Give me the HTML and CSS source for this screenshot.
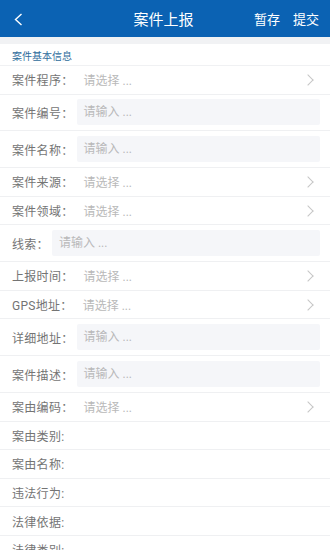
FILE: index.html
```html
<!DOCTYPE html>
<html lang="zh-CN">
<head>
  <meta charset="UTF-8">
  <meta name="viewport" content="width=device-width, initial-scale=1.0">
  <title>案件上报</title>
  <link rel="stylesheet" href="styles.css">
</head>
<body>
<!-- Top bar -->
<div class="topbar">
  <span class="back">
    <svg width="9" height="13" viewBox="0 0 9 13"><polyline points="7.5,1 1.5,6.5 7.5,12" fill="none" stroke="#fff" stroke-width="1.4"/></svg>
  </span>
  <span class="title">案件上报</span>
  <span class="actions"><span>暂存</span><span>提交</span></span>
</div>
<div class="strip"></div>

<div class="form">
  <div class="section-title">案件基本信息</div>

  <div class="row select"><span class="label">案件程序：</span><span class="value">请选择 ...</span><i class="arrow"></i></div>
  <div class="row input"><span class="label">案件编号：</span><span class="box">请输入 ...</span></div>
  <div class="row input"><span class="label">案件名称：</span><span class="box">请输入 ...</span></div>
  <div class="row select"><span class="label">案件来源：</span><span class="value">请选择 ...</span><i class="arrow"></i></div>
  <div class="row select"><span class="label">案件领域：</span><span class="value">请选择 ...</span><i class="arrow"></i></div>
  <div class="row input"><span class="label">线索：</span><span class="box">请输入 ...</span></div>
  <div class="row select"><span class="label">上报时间：</span><span class="value">请选择 ...</span><i class="arrow"></i></div>
  <div class="row select"><span class="label">GPS地址：</span><span class="value">请选择 ...</span><i class="arrow"></i></div>
  <div class="row input"><span class="label">详细地址：</span><span class="box">请输入 ...</span></div>
  <div class="row input"><span class="label">案件描述：</span><span class="box">请输入 ...</span></div>
  <div class="row select"><span class="label">案由编码：</span><span class="value">请选择 ...</span><i class="arrow"></i></div>
  <div class="row select"><span class="label">案由类别:</span></div>
  <div class="row select"><span class="label">案由名称:</span></div>
  <div class="row select"><span class="label">违法行为:</span></div>
  <div class="row select"><span class="label">法律依据:</span></div>
  <div class="row select"><span class="label">法律类别:</span></div>
</div>
</body>
</html>
```

FILE: styles.css
```css
body {
  margin: 0;
  background: #fff;
  font-family: Roboto, "Noto Sans CJK SC", sans-serif;
}

/* header */
.topbar {
  height: 37px;
  background: #0b62b3;
  color: #fff;
  display: flex;
  align-items: center;
  padding: 0 11px 0 14px;
}
.back {
  display: flex;
  align-items: center;
  margin-top: 1px;
}
.title {
  flex: 1;
  text-align: center;
  font-size: 15px;
  padding-left: 50px;
}
.actions {
  display: flex;
  gap: 13px;
  font-size: 13px;
}
.strip {
  height: 7px;
  background: #f1f2f4;
}

/* form */
.section-title {
  height: 22px;
  padding: 3px 0 0 12px;
  line-height: 20px;
  font-size: 10px;
  color: #2e6c9c;
  border-bottom: 1px solid #f0f1f3;
  box-sizing: border-box;
}
.row {
  display: flex;
  align-items: center;
  padding: 0 10px 0 12px;
  border-bottom: 1px solid #eff0f2;
  box-sizing: border-box;
  font-size: 12px;
}
.row.select {
  height: 28.6px;
}
.row.input {
  height: 36.8px;
}
.label {
  color: #747474;
  white-space: nowrap;
  letter-spacing: 0.3px;
}
.value {
  flex: 1;
  margin-left: 10px;
  color: #b9b9b9;
}
.box {
  flex: 1;
  height: 26px;
  line-height: 26px;
  margin-left: 3px;
  padding-left: 7px;
  background: #f5f6f9;
  color: #b9b9b9;
  border-radius: 2px;
}
.arrow {
  width: 7px;
  height: 7px;
  border-top: 1px solid #c6c6c6;
  border-right: 1px solid #c6c6c6;
  transform: rotate(45deg);
  margin-right: 8px;
}
```
